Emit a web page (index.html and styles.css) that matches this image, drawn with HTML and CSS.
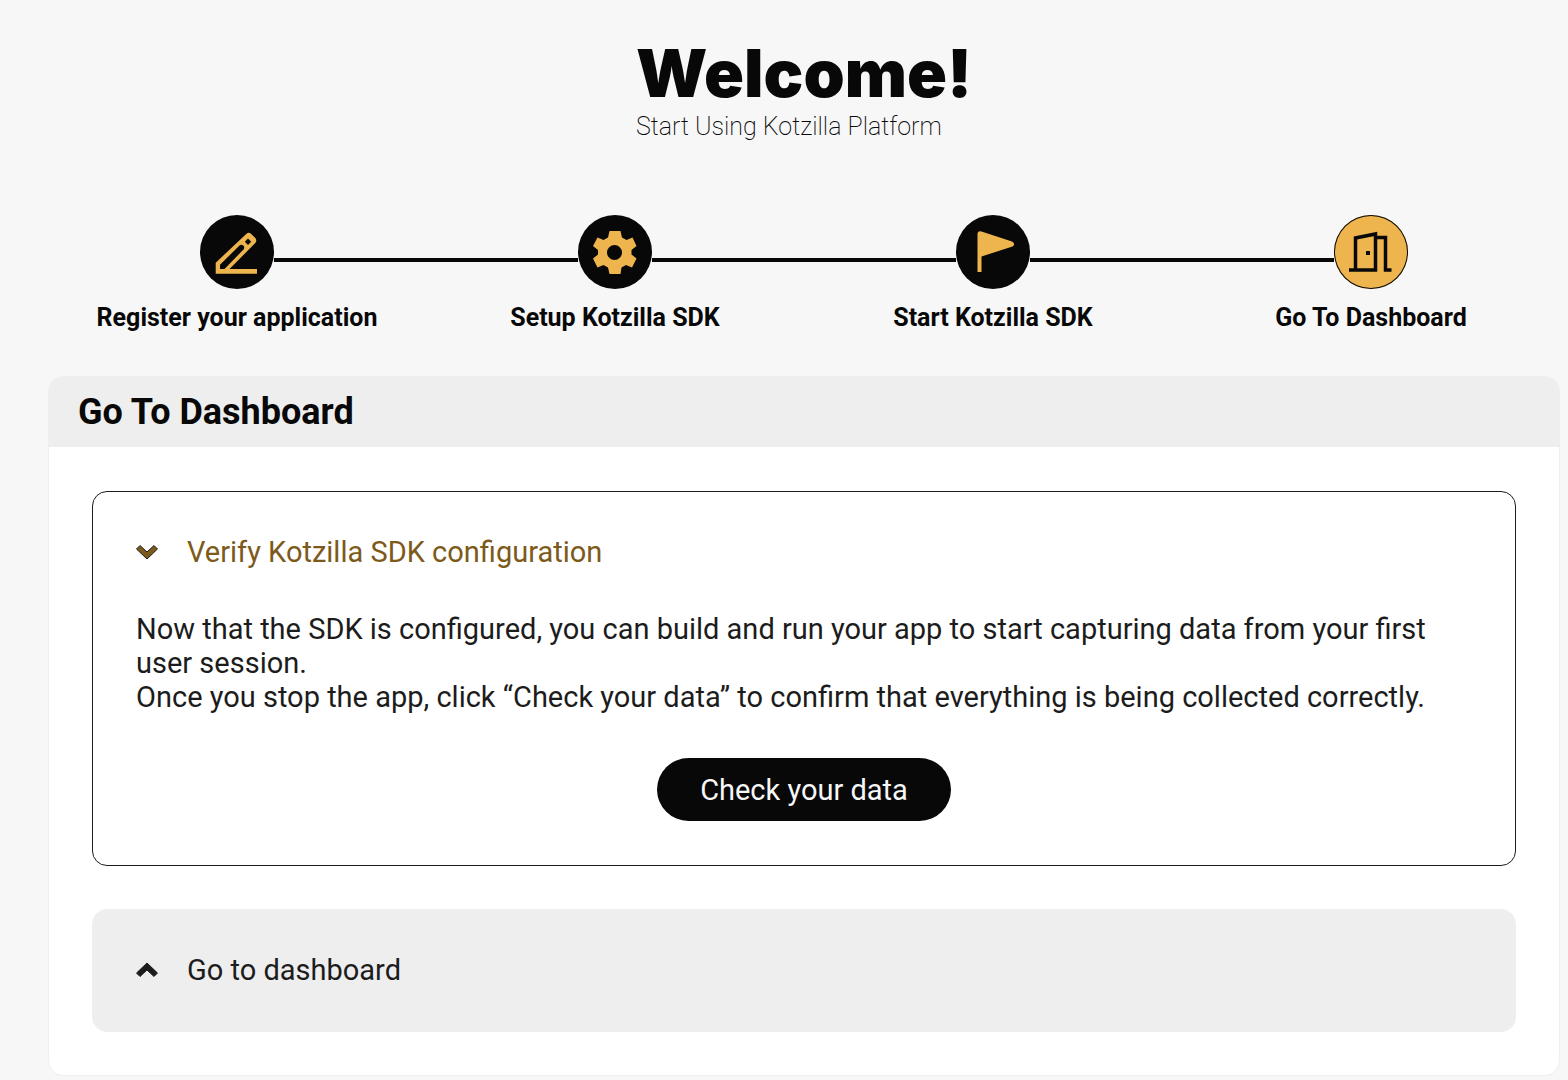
FILE: index.html
```
<!DOCTYPE html>
<html lang="en">
<head>
  <meta charset="UTF-8" />
  <meta name="viewport" content="width=device-width, initial-scale=1.0"/>
  <title>Kotzilla Platform</title>
  <link rel="stylesheet" href="styles.css">
</head>
<body>
  <div class="page">
    <header class="welcome">
      <div>
        <h1>Welcome!</h1>
        <p>Start Using Kotzilla Platform</p>
      </div>
    </header>

    <ol class="steps">
      <li class="step">
        <div class="step-track">
          <span class="step-icon">
            <svg viewBox="0 0 74 74" aria-hidden="true">
              <path d="M15.700 58.700V47.700L46.500 18.800Q48.800 16.800 51 18.800L55.300 23Q57.300 25.500 55.300 28L29.500 54H57V58.700Z" fill="#eeb54e"/>
              <path d="M20 54V49.700L39.500 30.500Q41.500 29 43.500 30.800Q45 32.800 43.500 34.500L24.500 54Z" fill="#080808"/>
              <path d="M48 23.500L51.200 26.700L48 29.900L44.800 26.700Z" fill="#080808"/>
            </svg>
          </span>
        </div>
        <span class="step-label">Register your application</span>
      </li>
      <li class="step">
        <div class="step-track">
          <span class="step-icon">
            <svg viewBox="0 0 74 74" aria-hidden="true">
              <path fill="#eeb54e" fill-rule="evenodd" d="M31.500 16H42.500L44 22.500L48.500 25L54.500 22.500L58.500 31L53.500 35V39.500L58.500 43.500L54 52.500L48 50L43.500 52.500L42.500 59H31.500L30 52.500L25.500 50L19.500 52.500L15 43.500L20 39.500V35L15 31L19.500 22.500L25.500 25L30 22.500ZM36.500 30A7.500 7.500 0 1 0 36.500 45A7.500 7.500 0 1 0 36.500 30Z"/>
            </svg>
          </span>
        </div>
        <span class="step-label">Setup Kotzilla SDK</span>
      </li>
      <li class="step">
        <div class="step-track">
          <span class="step-icon">
            <svg viewBox="0 0 74 74" aria-hidden="true">
              <path fill="#eeb54e" d="M21.500 57V18.500Q22 15.500 25.500 16.500L56 26.500Q60 29 56.500 31.500L25.500 41.500V57Z"/>
            </svg>
          </span>
        </div>
        <span class="step-label">Start Kotzilla SDK</span>
      </li>
      <li class="step" aria-current="step">
        <div class="step-track">
          <span class="step-icon current">
            <svg viewBox="0 0 74 74" aria-hidden="true">
              <g fill="none" stroke="#080808" stroke-width="3.500">
                <path d="M15 55H41.500V19L21.500 23V55"/>
                <path d="M41.500 22.500H51.500V55H57.500"/>
              </g>
              <rect x="32" y="36" width="4" height="4" fill="#080808"/>
            </svg>
          </span>
        </div>
        <span class="step-label">Go To Dashboard</span>
      </li>
    </ol>

    <main class="panel">
      <h2>Go To Dashboard</h2>
      <div class="panel-body">
        <section class="card open">
          <button type="button" class="card-toggle" aria-expanded="true" aria-controls="verify">
            <svg class="chevron" viewBox="0 0 22 16" aria-hidden="true">
              <path d="M.5 5L4 1.500L11 8L18 1.500L21.500 5L11 15Z"/>
            </svg>
            Verify Kotzilla SDK configuration
          </button>
          <div id="verify" class="card-content">
            <p>Now that the SDK is configured, you can build and run your app to start capturing data from your first user session.<br />
            Once you stop the app, click “Check your data” to confirm that everything is being collected correctly.</p>
            <button type="button" class="check-button">Check your data</button>
          </div>
        </section>

        <section class="card">
          <button type="button" class="card-toggle" aria-expanded="false">
            <svg class="chevron" viewBox="0 0 22 16" aria-hidden="true">
              <path d="M.5 11L4 14.500L11 8L18 14.500L21.500 11L11 1Z"/>
            </svg>
            Go to dashboard
          </button>
        </section>
      </div>
    </main>
  </div>
</body>
</html>
```
FILE: styles.css
```
* {
  box-sizing: border-box;
}

body {
  margin: 0;
  font-family: Roboto, Arial, sans-serif;
  background: #f7f7f7;
  color: #1c1c1c;
}

h1, h2, p, ol {
  margin: 0;
  padding: 0;
}

.page {
  padding: 39px 8px 4px 48px;
}

.welcome {
  display: flex;
  justify-content: center;
}

.welcome h1 {
  font-family: Inter, sans-serif;
  font-size: 66px;
  line-height: 68px;
  font-weight: 900;
  color: #080808;
}

.welcome p {
  font-size: 25px;
  line-height: 40px;
  font-weight: 200;
  color: #080808;
}

.steps {
  display: flex;
  list-style: none;
  margin-top: 68px;
}

.step {
  flex: 1;
  text-align: center;
}

.step-track {
  display: flex;
  align-items: center;
}

.step-track::before,
.step-track::after {
  content: "";
  flex: 1;
  height: 4px;
  margin-top: 16px;
  background: #080808;
}

.step:first-child .step-track::before,
.step:last-child .step-track::after {
  background: none;
}

.step-icon {
  width: 74px;
  height: 74px;
  border-radius: 50%;
  background: #080808;
}

.step-icon svg {
  display: block;
}

.step-icon.current {
  background: #eeb54e;
  box-shadow: inset 0 0 0 1px #080808;
}

.step-label {
  display: block;
  margin-top: 13px;
  font-size: 25px;
  line-height: 32px;
  font-weight: 700;
  color: #080808;
}

.panel {
  margin-top: 42px;
  border: 1px solid #eee;
  border-radius: 15px;
  background: #fff;
  overflow: hidden;
}

.panel h2 {
  padding: 0 29px;
  font-size: 36px;
  line-height: 70px;
  font-weight: 700;
  background: #eee;
  color: #080808;
}

.panel-body {
  display: flex;
  flex-direction: column;
  gap: 43px;
  padding: 44px 43px 43px;
}

.card {
  padding: 43px 43px 44px;
  border: 1px solid #eee;
  border-radius: 15px;
  background: #eee;
  font-size: 29px;
  line-height: 34px;
}

.card.open {
  background: #fff;
  border-color: #1c1c1c;
}

.card-toggle {
  display: flex;
  align-items: center;
  gap: 29px;
  width: 100%;
  padding: 0;
  border: none;
  background: none;
  font: inherit;
  color: inherit;
  text-align: left;
  cursor: pointer;
}

.open .card-toggle {
  color: #7c5a1a;
}

.chevron {
  width: 22px;
  height: 16px;
  fill: currentColor;
  stroke: #1c1c1c;
}

.card-content {
  display: flex;
  flex-direction: column;
  align-items: center;
  gap: 44px;
  margin-top: 43px;
}

.check-button {
  padding: 15px 43px 14px;
  border: none;
  border-radius: 32px;
  background: #080808;
  color: #f7f7f7;
  font: inherit;
  cursor: pointer;
}
```
